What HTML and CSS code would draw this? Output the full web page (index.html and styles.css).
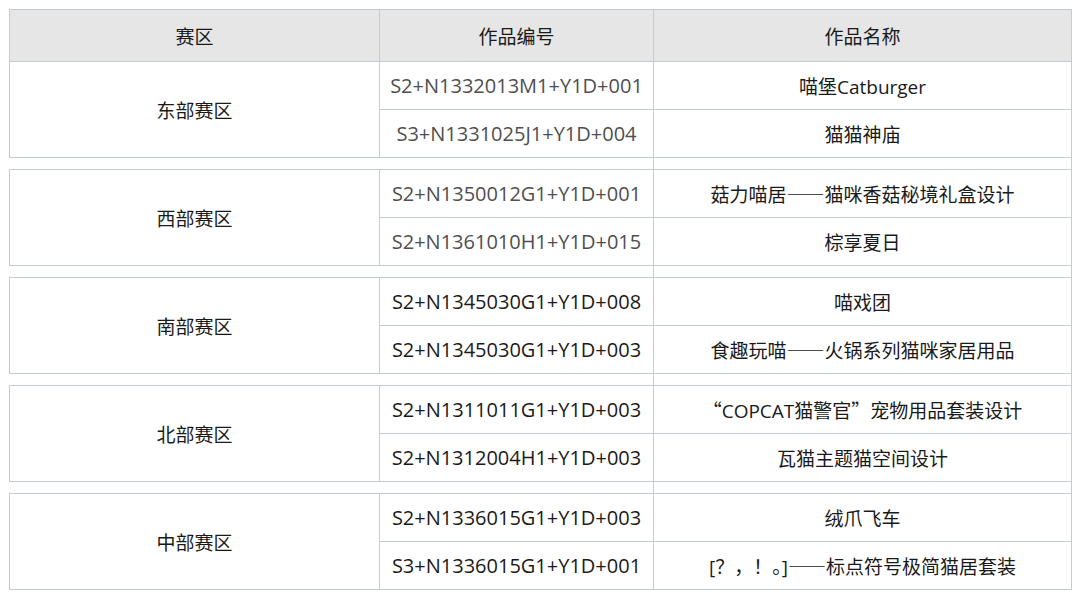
FILE: index.html
```html
<!DOCTYPE html>
<html lang="zh">
<head>
<meta charset="utf-8">
<link rel="stylesheet" href="styles.css">
</head>
<body>
<table class="works">
  <colgroup>
    <col class="c-region">
    <col class="c-code">
    <col class="c-name">
  </colgroup>
  <thead>
    <tr class="head">
      <th>赛区</th>
      <th>作品编号</th>
      <th>作品名称</th>
    </tr>
  </thead>
  <tbody>
    <tr class="row">
      <td class="region" rowspan="2">东部赛区</td>
      <td class="code light">S2+N1332013M1+Y1D+001</td>
      <td class="name">喵堡Catburger</td>
    </tr>
    <tr class="row">
      <td class="code light">S3+N1331025J1+Y1D+004</td>
      <td class="name">猫猫神庙</td>
    </tr>
    <tr class="gap"><td class="gap-left" colspan="2"></td><td class="gap-right"></td></tr>

    <tr class="row">
      <td class="region" rowspan="2">西部赛区</td>
      <td class="code light">S2+N1350012G1+Y1D+001</td>
      <td class="name">菇力喵居<span class="cjk">——</span>猫咪香菇秘境礼盒设计</td>
    </tr>
    <tr class="row">
      <td class="code light">S2+N1361010H1+Y1D+015</td>
      <td class="name">棕享夏日</td>
    </tr>
    <tr class="gap"><td class="gap-left" colspan="2"></td><td class="gap-right"></td></tr>

    <tr class="row">
      <td class="region" rowspan="2">南部赛区</td>
      <td class="code">S2+N1345030G1+Y1D+008</td>
      <td class="name">喵戏团</td>
    </tr>
    <tr class="row">
      <td class="code">S2+N1345030G1+Y1D+003</td>
      <td class="name">食趣玩喵<span class="cjk">——</span>火锅系列猫咪家居用品</td>
    </tr>
    <tr class="gap"><td class="gap-left" colspan="2"></td><td class="gap-right"></td></tr>

    <tr class="row">
      <td class="region" rowspan="2">北部赛区</td>
      <td class="code">S2+N1311011G1+Y1D+003</td>
      <td class="name"><span class="cjk">“</span>COPCAT猫警官<span class="cjk">”</span>宠物用品套装设计</td>
    </tr>
    <tr class="row">
      <td class="code">S2+N1312004H1+Y1D+003</td>
      <td class="name">瓦猫主题猫空间设计</td>
    </tr>
    <tr class="gap"><td class="gap-left" colspan="2"></td><td class="gap-right"></td></tr>

    <tr class="row">
      <td class="region" rowspan="2">中部赛区</td>
      <td class="code">S2+N1336015G1+Y1D+003</td>
      <td class="name">绒爪飞车</td>
    </tr>
    <tr class="row">
      <td class="code">S3+N1336015G1+Y1D+001</td>
      <td class="name">[<span class="cjk">？，！。</span>]<span class="cjk">——</span>标点符号极简猫居套装</td>
    </tr>
  </tbody>
</table>
</body>
</html>
```
FILE: styles.css
```css
html, body {
  margin: 0;
  padding: 0;
  background: #ffffff;
}

body {
  padding: 9px 0 0 9px;
  font-family: "Open Sans", "Noto Sans CJK SC", sans-serif;
  font-size: 19px;
  color: #1a1a1a;
}

.works {
  border-collapse: collapse;
  table-layout: fixed;
  width: 1062px;
}

.c-region { width: 370px; }
.c-code { width: 274px; }
.c-name { width: 418px; }

.works th,
.works td {
  border: 1px solid #c3cbd8;
  padding: 0 2px;
  text-align: center;
  vertical-align: middle;
  font-weight: normal;
  white-space: nowrap;
}

.head th {
  height: 51px;
  background: #e6e6e6;
}

.row td {
  height: 47px;
}

.works .code {
  font-size: 20px;
}

.code.light {
  color: #4f4f4f;
}

.cjk {
  font-family: "Noto Sans CJK SC", sans-serif;
}

.gap td {
  height: 11px;
  padding: 0;
}

.works .gap-left {
  border-left: 0;
  border-right: 0;
}
```
